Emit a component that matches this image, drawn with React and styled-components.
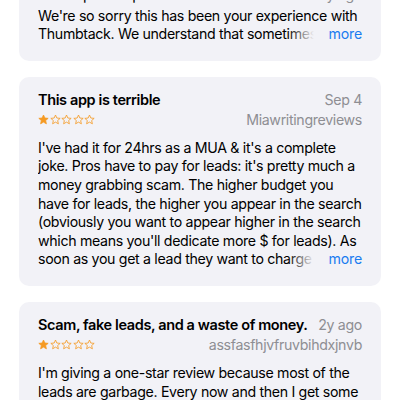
import React from "react";
import styled, { createGlobalStyle } from "styled-components";

const Global = createGlobalStyle`
  html, body { margin: 0; padding: 0; background: #ffffff; }
  body { font-family: Inter, "Noto Sans", "Liberation Sans", sans-serif; -webkit-font-smoothing: antialiased; }
  #root { width: 400px; height: 400px; overflow: hidden; }
`;

const List = styled.div`
  display: flex;
  flex-direction: column;
  gap: 16px;
  padding: 0 19px;
  margin-top: -28px;
`;

const Card = styled.div`
  background: #f2f2f7;
  border-radius: 10px;
  padding: 13px 19px 17px;
  display: flex;
  flex-direction: column;
`;

const Row = styled.div`
  display: flex;
  justify-content: space-between;
  align-items: center;
  height: ${(p) => p.$h || 20}px;
  margin-bottom: ${(p) => p.$mb || 0}px;
`;

const Title = styled.div`
  font-size: 14.5px;
  font-weight: ${(p) => (p.$regular ? 400 : 600)};
  color: #000;
  letter-spacing: -0.38px;
  white-space: nowrap;
`;

const Meta = styled.div`
  font-size: 14.2px;
  color: #8e8e93;
  letter-spacing: -0.34px;
  white-space: nowrap;
`;

const Stars = styled.div`
  display: flex;
  gap: 0.6px;
`;

const Body = styled.div`
  position: relative;
  margin-top: ${(p) => p.$mt || 0}px;
  font-size: 14.2px;
  line-height: 18.6px;
  color: #000;
  letter-spacing: -0.34px;
`;

const Line = styled.div`
  white-space: nowrap;
  overflow: hidden;
`;

const More = styled.span`
  position: absolute;
  right: 0;
  bottom: 0;
  padding-left: 40px;
  color: #1a7cf0;
  letter-spacing: -0.2px;
  background: linear-gradient(to right, rgba(242, 242, 247, 0) 0px, #f2f2f7 26px);
`;

const Star = ({ filled }) => (
  <svg width="11" height="11" viewBox="0 0 24 24">
    <path
      d="M12 2.2l2.95 6.6 7.2.7-5.45 4.8 1.6 7.1L12 17.7l-6.3 3.7 1.6-7.1L1.85 9.5l7.2-.7z"
      fill={filled ? "#f59a23" : "none"}
      stroke="#f59a23"
      strokeWidth="1.8"
      strokeLinejoin="round"
    />
  </svg>
);

const Rating = ({ value }) => (
  <Stars>
    {[0, 1, 2, 3, 4].map((i) => (
      <Star key={i} filled={i < value} />
    ))}
  </Stars>
);

const Review = ({ title, date, author, lines, more }) => (
  <Card>
    <Row>
      <Title>{title}</Title>
      <Meta>{date}</Meta>
    </Row>
    <Row>
      <Rating value={1} />
      <Meta>{author}</Meta>
    </Row>
    <Body $mt={9}>
      {lines.map((l, i) => (
        <Line key={i}>{l}</Line>
      ))}
      {more && <More>more</More>}
    </Body>
  </Card>
);

export default function App() {
  return (
    <>
      <Global />
      <List>
        <Card>
          <Row $h={18.6} $mb={3}>
            <Title $regular>Developer Response</Title>
            <Meta>1y ago</Meta>
          </Row>
          <Body>
            <Line>We're so sorry this has been your experience with</Line>
            <Line>Thumbtack. We understand that sometimes that</Line>
            <More>more</More>
          </Body>
        </Card>
        <Review
          title="This app is terrible"
          date="Sep 4"
          author="Miawritingreviews"
          more
          lines={[
            "I've had it for 24hrs as a MUA & it's a complete",
            "joke. Pros have to pay for leads: it's pretty much a",
            "money grabbing scam. The higher budget you",
            "have for leads, the higher you appear in the search",
            "(obviously you want to appear higher in the search",
            "which means you'll dedicate more $ for leads). As",
            "soon as you get a lead they want to charge you",
          ]}
        />
        <Review
          title="Scam, fake leads, and a waste of money."
          date="2y ago"
          author="assfasfhjvfruvbihdxjnvb"
          lines={[
            "I'm giving a one-star review because most of the",
            "leads are garbage. Every now and then I get some",
            "good ones but most of them are fake.",
          ]}
        />
      </List>
    </>
  );
}
